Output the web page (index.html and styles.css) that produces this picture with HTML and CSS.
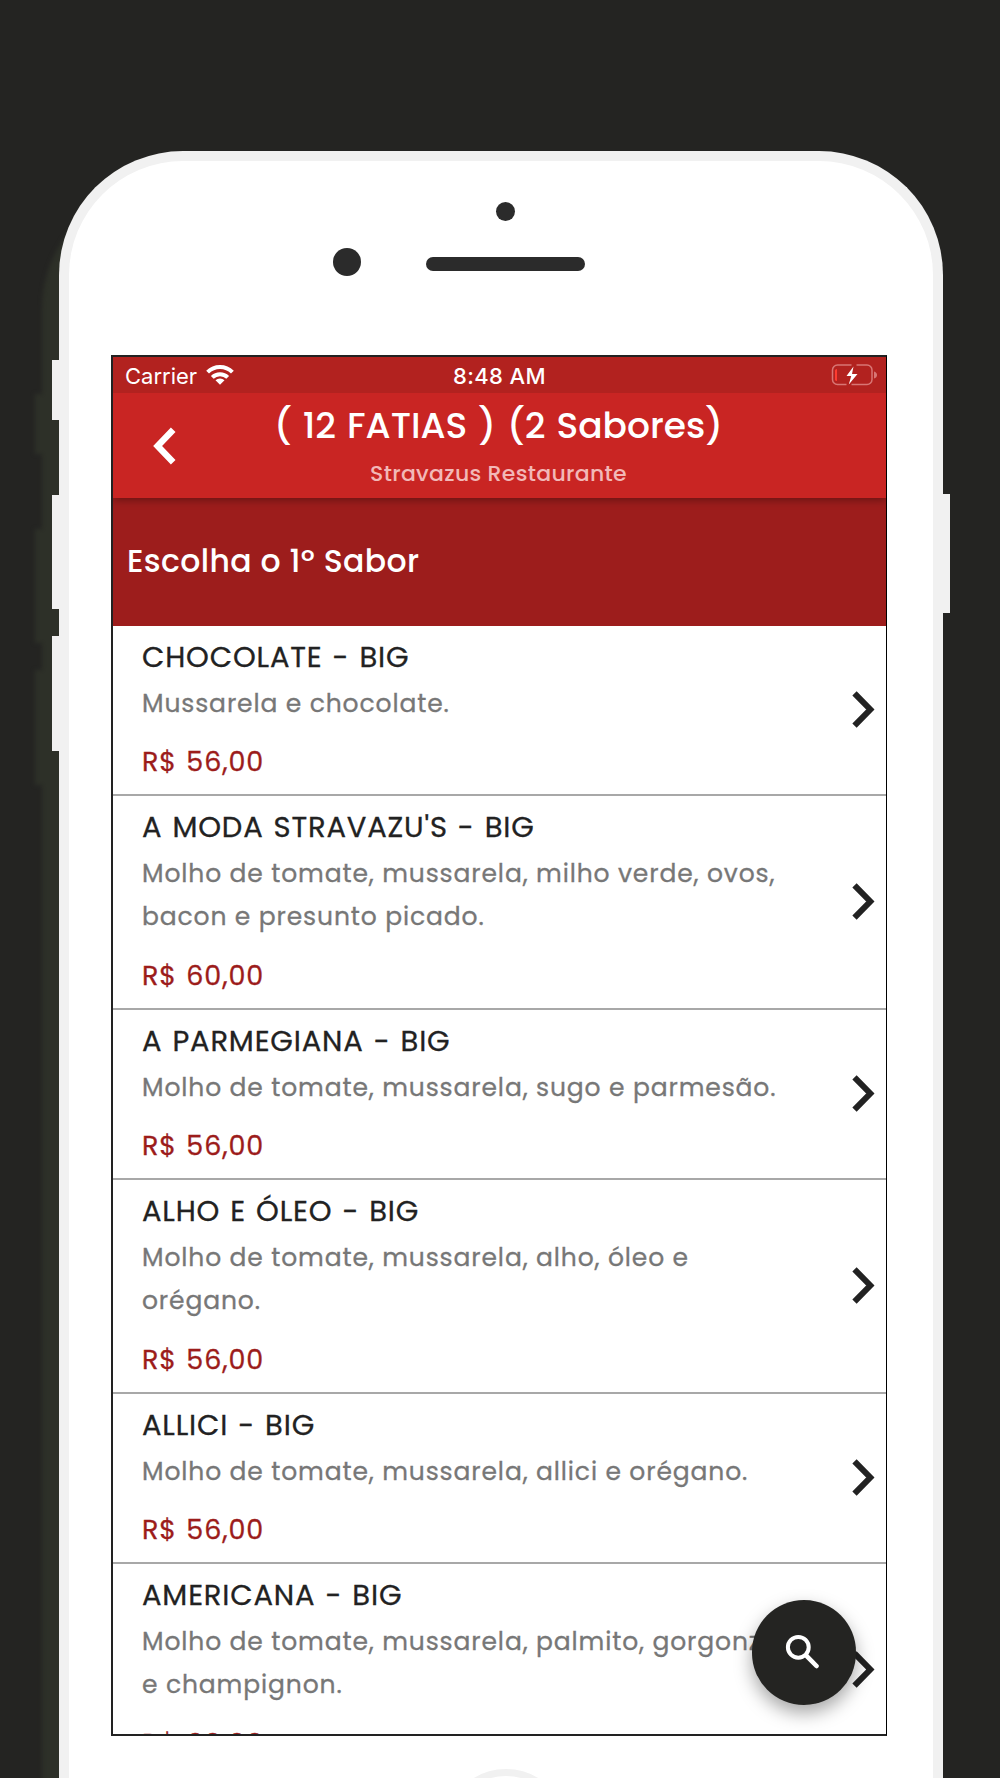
FILE: index.html
```html
<!DOCTYPE html>
<html lang="pt-BR">
<head>
    <meta charset="UTF-8">
    <meta name="viewport" content="width=device-width, initial-scale=1.0">
    <title>Stravazus Restaurante</title>
    <link rel="stylesheet" href="styles.css">
</head>
<body>
    <div class="phone">
        <div class="side-btn mute"></div>
        <div class="side-btn vol-up"></div>
        <div class="side-btn vol-down"></div>
        <div class="side-btn power"></div>
        <div class="shell">
            <div class="front">
                <div class="camera"></div>
                <div class="sensor"></div>
                <div class="speaker"></div>
            </div>
            <div class="screen">
                <div class="status-bar">
                    <div class="carrier">
                        <span>Carrier</span>
                        <svg width="28" height="21" viewBox="0 0 28 21">
                            <g fill="none" stroke="#fff" stroke-width="4">
                                <path d="M1.6 8.2a17.6 17.6 0 0 1 24.8 0"/>
                                <path d="M6.3 13.4a11 11 0 0 1 15.4 0"/>
                            </g>
                            <path fill="#fff" d="M9.5 16.3a6.5 6.5 0 0 1 9 0L14 20.8z"/>
                        </svg>
                    </div>
                    <div class="time">8:48 AM</div>
                    <svg class="battery" width="46" height="22" viewBox="0 0 46 22">
                        <path d="M20.500 1H6.500a5 5 0 0 0-5 5v9.500a5 5 0 0 0 5 5h9M25.500 1h10.500a5 5 0 0 1 5 5v9.500a5 5 0 0 1-5 5H20.500" fill="none" stroke="#d87674" stroke-width="1.500"/>
                        <path d="M43 7.500q3 1 3 3.500t-3 3.500z" fill="#d87674"/>
                        <path d="M4 6.500q0-1.500 2-1.500v12Q4 17 4 15.500z" fill="#ff3b30"/>
                        <path d="M22.500 2.500L15.500 12h4.700l-2.400 8.500 8.700-10.500h-5.500z" fill="#fff"/>
                    </svg>
                </div>
                <div class="header">
                    <svg class="back" width="23" height="38" viewBox="0 0 23 38">
                        <path d="M20.200 2.700L4.600 19l15.600 16.300" fill="none" stroke="#fff" stroke-width="6.400"/>
                    </svg>
                    <div class="header-text">
                        <h1>( 12 FATIAS ) (2 Sabores)</h1>
                        <p>Stravazus Restaurante</p>
                    </div>
                </div>
                <div class="banner">Escolha o 1º Sabor</div>
                <ul class="list">
                    <li class="item">
                        <div class="info">
                            <h2>CHOCOLATE - BIG</h2>
                            <p class="desc">Mussarela e chocolate.</p>
                            <p class="price">R$ 56,00</p>
                        </div>
                        <svg class="arrow" viewBox="0 0 23 37"><path d="M2.500 2.400L18.300 18.500 2.500 34.600"/></svg>
                    </li>
                    <li class="item">
                        <div class="info">
                            <h2>A MODA STRAVAZU'S - BIG</h2>
                            <p class="desc">Molho de tomate, mussarela, milho verde, ovos,<br>bacon e presunto picado.</p>
                            <p class="price">R$ 60,00</p>
                        </div>
                        <svg class="arrow" viewBox="0 0 23 37"><path d="M2.500 2.400L18.300 18.500 2.500 34.600"/></svg>
                    </li>
                    <li class="item">
                        <div class="info">
                            <h2>A PARMEGIANA - BIG</h2>
                            <p class="desc">Molho de tomate, mussarela, sugo e parmesão.</p>
                            <p class="price">R$ 56,00</p>
                        </div>
                        <svg class="arrow" viewBox="0 0 23 37"><path d="M2.500 2.400L18.300 18.500 2.500 34.600"/></svg>
                    </li>
                    <li class="item">
                        <div class="info">
                            <h2>ALHO E ÓLEO - BIG</h2>
                            <p class="desc">Molho de tomate, mussarela, alho, óleo e<br>orégano.</p>
                            <p class="price">R$ 56,00</p>
                        </div>
                        <svg class="arrow" viewBox="0 0 23 37"><path d="M2.500 2.400L18.300 18.500 2.500 34.600"/></svg>
                    </li>
                    <li class="item">
                        <div class="info">
                            <h2>ALLICI - BIG</h2>
                            <p class="desc">Molho de tomate, mussarela, allici e orégano.</p>
                            <p class="price">R$ 56,00</p>
                        </div>
                        <svg class="arrow" viewBox="0 0 23 37"><path d="M2.500 2.400L18.300 18.500 2.500 34.600"/></svg>
                    </li>
                    <li class="item">
                        <div class="info">
                            <h2>AMERICANA - BIG</h2>
                            <p class="desc">Molho de tomate, mussarela, palmito, gorgonzola<br>e champignon.</p>
                            <p class="price">R$ 60,00</p>
                        </div>
                        <svg class="arrow" viewBox="0 0 23 37"><path d="M2.500 2.400L18.300 18.500 2.500 34.600"/></svg>
                    </li>
                </ul>
                <button class="search-btn" aria-label="Buscar">
                    <svg width="36" height="36" viewBox="0 0 36 36" fill="none" stroke="#fff">
                        <circle cx="13.300" cy="13.300" r="10.400" stroke-width="4"/>
                        <path d="M22 22.300L31.500 32" stroke-width="4.600" stroke-linecap="round"/>
                    </svg>
                </button>
            </div>
            <div class="home-btn"></div>
        </div>
    </div>
</body>
</html>
```
FILE: styles.css
```css
* {
    box-sizing: border-box;
    margin: 0;
    padding: 0;
}
body {
    font-family: 'Poppins', 'Inter', sans-serif;
    background-color: #242422;
    height: 1778px;
    padding: 151px 57px 0 59px;
    overflow: hidden;
}
.phone {
    position: relative;
    height: 1627px;
    filter: drop-shadow(-17px 34px 2px #2d3028);
}
/* Hardware buttons sit on the edge of the shell */
.side-btn {
    position: absolute;
    left: -7.5px;
    width: 20px;
    background: #f1f1f1;
}
.mute {
    top: 209px;
    height: 60px;
}
.vol-up {
    top: 344px;
    height: 114px;
}
.vol-down {
    top: 485px;
    height: 115px;
}
.power {
    left: auto;
    right: -7px;
    top: 343px;
    height: 119px;
}
.shell {
    position: relative;
    display: flex;
    flex-direction: column;
    height: 1627px;
    background: #fff;
    border: 10px solid #f1f1f1;
    border-bottom: none;
    border-radius: 124px 124px 0 0;
    overflow: hidden;
}
.front {
    position: relative;
    height: 194px;
    flex: none;
}
.front div {
    position: absolute;
    background: #2b2b2b;
}
.camera {
    top: 41px;
    left: 427px;
    width: 19px;
    height: 19px;
    border-radius: 50%;
}
.sensor {
    top: 87px;
    left: 264px;
    width: 28px;
    height: 28px;
    border-radius: 50%;
}
.speaker {
    top: 96px;
    left: 357px;
    width: 159px;
    height: 14px;
    border-radius: 7px;
}
.screen {
    position: relative;
    flex: none;
    width: 776px;
    height: 1381px;
    margin-left: 42px;
    border: 2px solid #222;
    border-right: 1px solid #000;
    background: #fff;
    overflow: hidden;
}
.status-bar {
    position: relative;
    display: grid;
    grid-template-columns: 1fr auto 1fr;
    align-items: center;
    height: 36px;
    padding: 1px 9px 0 12px;
    background: #b2221f;
    color: #fff;
    font-family: 'Inter', sans-serif;
    font-size: 22px;
    z-index: 2;
}
.carrier {
    display: flex;
    align-items: center;
    gap: 9px;
}
.carrier svg {
    margin-top: -3px;
}
.time {
    margin-right: 3px;
    font-weight: 500;
    letter-spacing: 0.4px;
}
.battery {
    justify-self: end;
    margin-top: -2px;
}
.header {
    position: relative;
    display: flex;
    align-items: center;
    height: 105px;
    background: #c92523;
    box-shadow: 0 2px 8px rgba(0, 0, 0, 0.35);
    color: #fff;
    z-index: 1;
}
.back {
    margin-left: 40px;
}
.header-text {
    flex: 1;
    margin-right: 65px;
    text-align: center;
}
.header h1 {
    font-size: 36px;
    font-weight: 500;
    line-height: 50px;
    letter-spacing: 0;
    word-spacing: 1.6px;
    white-space: nowrap;
}
.header p {
    font-size: 22px;
    font-weight: 500;
    line-height: 30px;
    margin-top: 8px;
    padding-bottom: 2px;
    letter-spacing: 0.3px;
    color: #f2b8b7;
}
.banner {
    height: 127.5px;
    padding: 0 14px 1px;
    display: flex;
    align-items: center;
    background: #9d1d1c;
    color: #fff;
    font-size: 31.5px;
    font-weight: 500;
    letter-spacing: 0.35px;
}
.list {
    list-style: none;
}
.item {
    display: flex;
    align-items: center;
    justify-content: space-between;
    padding: 10px 11px 11px 29px;
    border-bottom: 2px solid #a8a8a8;
}
.info {
    white-space: nowrap;
    width: 640px;
    -webkit-text-stroke: 0.3px;
}
.info h2 {
    font-size: 29px;
    font-weight: 400;
    line-height: 42px;
    letter-spacing: 0.82px;
    word-spacing: 1.5px;
    color: #222;
}
.desc {
    margin-top: 4px;
    font-size: 25px;
    line-height: 43px;
    letter-spacing: 0.87px;
    color: #777;
}
.price {
    margin-top: 16.5px;
    font-size: 27px;
    line-height: 42px;
    letter-spacing: 0.9px;
    word-spacing: 1.2px;
    color: #9c1c1b;
}
.arrow {
    flex: none;
    width: 23px;
    height: 37px;
    margin-top: 1px;
    fill: none;
    stroke: #222;
    stroke-width: 6;
}
.search-btn {
    position: absolute;
    left: 638.5px;
    top: 1243px;
    width: 104.5px;
    height: 104.5px;
    display: flex;
    align-items: center;
    justify-content: center;
    padding: 0 1px 1px 0;
    border: none;
    border-radius: 50%;
    background: #242422;
    box-shadow: 0 8px 18px rgba(0, 0, 0, 0.35);
}
.home-btn {
    flex: none;
    align-self: center;
    width: 122px;
    height: 122px;
    margin: 33px 0 0 9px;
    border: 7px solid #f1f1f1;
    border-radius: 50%;
}
```
